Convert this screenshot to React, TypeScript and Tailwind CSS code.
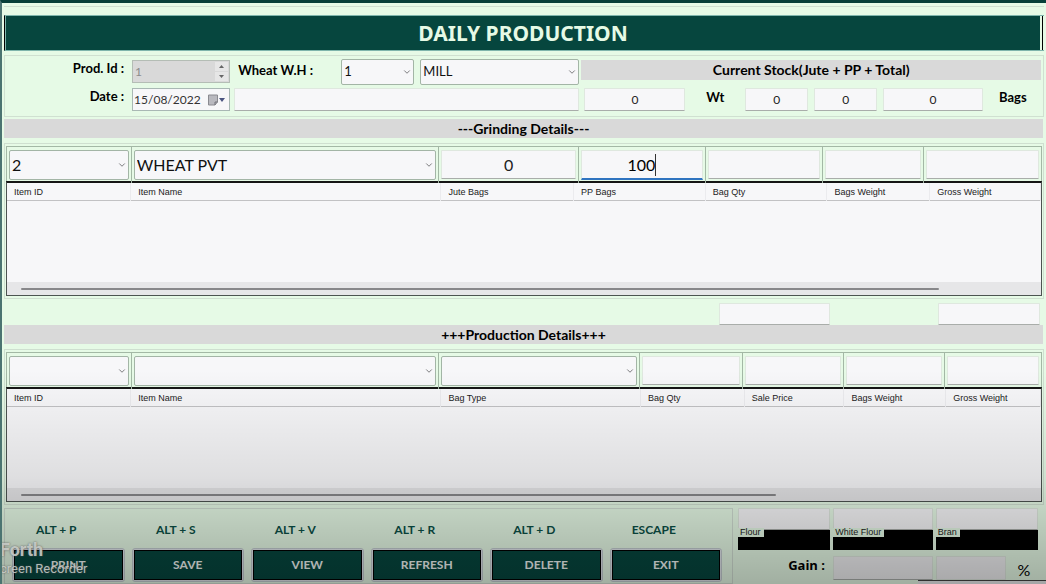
import { ChevronDown } from "lucide-react";

type SelectProps = {
  label: string;
  value?: string;
  className?: string;
  large?: boolean;
};

function Combo({ label, value = "", className = "", large = false }: SelectProps) {
  return (
    <div className={`relative min-w-0 ${className}`}>
      <select
        aria-label={label}
        defaultValue={value}
        className={`block h-full w-full min-w-0 appearance-none rounded-[2px] border border-[#a3b5a6] bg-[#f7f7f9] pr-5 pl-[2px] text-[#111] outline-none ${
          large ? "text-[16px]" : "text-[13px]"
        }`}
      >
        <option value={value}>{value}</option>
      </select>
      <ChevronDown
        className="pointer-events-none absolute top-1/2 right-[2px] h-[10px] w-[10px] -translate-y-1/2 text-[#7d7d80]"
        strokeWidth={2.4}
      />
    </div>
  );
}

type FieldProps = {
  label: string;
  value?: string;
  className?: string;
};

function Field({ label, value = "", className = "" }: FieldProps) {
  return (
    <input
      type="text"
      aria-label={label}
      defaultValue={value}
      className={`block min-w-0 rounded-[1px] border border-[#dfe8df] border-b-[#a9adaa] bg-[#f7f7f9] text-center text-[#222] outline-none ${className}`}
    />
  );
}

function SectionBar({ children }: { children: string }) {
  return (
    <h2 className="mr-px h-[19px] bg-[#d9d9d9] text-center text-[14px] leading-[20px] font-bold text-black">
      {children}
    </h2>
  );
}

type Column = { name: string; width: number };

function DataGrid({ columns, caption, thumb }: { columns: Column[]; caption: string; thumb: string }) {
  return (
    <div className="flex h-[115px] flex-col border border-t-2 border-[#4c5350] border-t-[#151515] bg-[#f7f7f9]">
      <table className="w-full table-fixed border-collapse" aria-label={caption}>
        <colgroup>
          {columns.map((c) => (
            <col key={c.name} style={{ width: `${(c.width / 1036) * 100}%` }} />
          ))}
        </colgroup>
        <thead>
          <tr className="h-[17px] border-b border-[#c2c2c4]">
            {columns.map((c) => (
              <th
                key={c.name}
                className="border-r border-[#ebebee] p-0 pt-px pl-[7px] text-left font-['Liberation_Sans',sans-serif] text-[9px] leading-[16px] font-normal text-[#222]"
              >
                {c.name}
              </th>
            ))}
          </tr>
        </thead>
        <tbody />
      </table>
      <div className="mt-auto flex h-[13px] items-center bg-[#e6e6e8] pl-[14px]">
        <div className={`h-[2px] rounded-full bg-[#87878a] ${thumb}`} />
      </div>
    </div>
  );
}

const grindingColumns: Column[] = [
  { name: "Item ID", width: 124 },
  { name: "Item Name", width: 311 },
  { name: "Jute Bags", width: 133 },
  { name: "PP Bags", width: 132 },
  { name: "Bag Qty", width: 122 },
  { name: "Bags Weight", width: 103 },
  { name: "Gross Weight", width: 111 },
];

const productionColumns: Column[] = [
  { name: "Item ID", width: 124 },
  { name: "Item Name", width: 311 },
  { name: "Bag Type", width: 200 },
  { name: "Bag Qty", width: 104 },
  { name: "Sale Price", width: 100 },
  { name: "Bags Weight", width: 102 },
  { name: "Gross Weight", width: 95 },
];

const actions = [
  { keys: "ALT + P", name: "PRINT" },
  { keys: "ALT + S", name: "SAVE" },
  { keys: "ALT + V", name: "VIEW" },
  { keys: "ALT + R", name: "REFRESH" },
  { keys: "ALT + D", name: "DELETE" },
  { keys: "ESCAPE", name: "EXIT" },
];

const outputs = ["Flour", "White Flour", "Bran"];

const cell = "min-w-0 border-r border-[#a3b8a5] px-[2px] py-[3px] last:border-r-0";

export default function App() {
  return (
    <main className="relative min-h-screen overflow-hidden border-t-3 border-l-2 border-t-[#073f38] border-l-[#4b7471] bg-[#e6fae6] pr-[2px] pl-[2px] font-[Lato,'Noto_Sans',sans-serif] text-black">
      <div className="h-1 border-b border-[#cfe0d0]" />

      <header className="mt-2 flex h-[36px] border-y border-[#7fb5ac] border-l border-l-black">
        <h1 className="mr-[2px] flex-1 border-l border-[#7fb5ac] bg-[#06463e] text-center font-['Noto_Sans','Open_Sans',sans-serif] text-[21px] leading-[35px] font-bold text-[#e6fae6]">
          DAILY PRODUCTION
        </h1>
        <div className="mr-px w-px bg-black" />
      </header>

      <section className="mt-1 grid h-[62px] grid-cols-[577fr_462fr] border border-[#d0e0d1] pt-[3px]">
        <div>
          <div className="grid h-[26px] grid-cols-[127fr_98fr_111fr_73fr_6fr_159fr_2fr]">
            <label htmlFor="prod-id" className="pr-2 text-right text-[13px] leading-[19px] font-bold">
              Prod. Id :
            </label>
            <div className="mt-px flex h-[23px] border border-[#b4bdb5] bg-[#d9d9d9]">
              <input
                id="prod-id"
                disabled
                defaultValue="1"
                className="w-full min-w-0 flex-1 pl-[2px] text-[12px] text-[#8b8b8b]"
              />
              <div className="my-px mr-px flex w-[13px] flex-col gap-px">
                <button type="button" aria-label="Increase" disabled className="flex flex-1 items-center justify-center bg-[#e6e6e6]">
                  <svg width="5" height="3" viewBox="0 0 5 3">
                    <path d="M0 3L2.5 0L5 3Z" fill="#666" />
                  </svg>
                </button>
                <button type="button" aria-label="Decrease" disabled className="flex flex-1 items-center justify-center bg-[#e6e6e6]">
                  <svg width="5" height="3" viewBox="0 0 5 3">
                    <path d="M0 0L2.5 3L5 0Z" fill="#666" />
                  </svg>
                </button>
              </div>
            </div>
            <label htmlFor="wheat-wh" className="pl-2 text-[13px] leading-[22px] font-bold">
              Wheat W.H :
            </label>
            <div className="relative h-[26px] min-w-0">
              <select
                id="wheat-wh"
                defaultValue="1"
                className="block h-full w-full appearance-none rounded-[2px] border border-[#a3b5a6] bg-[#f7f7f9] pr-5 pl-[2px] text-[13px] text-[#111] outline-none"
              >
                <option value="1">1</option>
              </select>
              <ChevronDown
                className="pointer-events-none absolute top-1/2 right-[2px] h-[10px] w-[10px] -translate-y-1/2 text-[#7d7d80]"
                strokeWidth={2.4}
              />
            </div>
            <div />
            <Combo label="Wheat warehouse name" value="MILL" className="h-[26px]" />
          </div>
          <div className="mt-[3px] grid h-[23px] grid-cols-[127fr_98fr_4fr_345fr_2fr]">
            <label htmlFor="date" className="pr-2 text-right text-[13px] leading-[16px] font-bold">
              Date :
            </label>
            <div className="flex items-center border border-[#a9b8b4] bg-[#f7f7f9] pr-1">
              <input
                id="date"
                defaultValue="15/08/2022"
                className="h-full w-full min-w-0 flex-1 pl-px text-[12px] text-[#333] outline-none"
              />
              <button type="button" aria-label="Open calendar" className="flex items-center gap-px">
                <svg width="10" height="12" viewBox="0 0 10 12">
                  <path d="M0.5 1H9.5V8L7 11H0.5Z" fill="#b9b9bf" stroke="#8a8a90" />
                  <path d="M9.5 8H7V11" fill="none" stroke="#707078" />
                </svg>
                <svg width="6" height="4" viewBox="0 0 6 4">
                  <path d="M0 0H6L3 4Z" fill="#4a5480" />
                </svg>
              </button>
            </div>
            <div />
            <Field label="Remarks" className="text-[13px]" />
          </div>
        </div>
        <div className="pr-[2px]">
          <h2 className="mt-px h-[20px] bg-[#d9d9d9] text-center text-[14px] leading-[19px] font-bold">
            Current Stock(Jute + PP + Total)
          </h2>
          <div className="mt-2 grid h-[23px] grid-cols-[3fr_101fr_60fr_63fr_6fr_63fr_6fr_100fr_58fr] text-[12px]">
            <div />
            <Field label="Stock weight" value="0" />
            <span className="text-center text-[13px] leading-[19px] font-bold">Wt</span>
            <Field label="Jute stock" value="0" />
            <div />
            <Field label="PP stock" value="0" />
            <div />
            <Field label="Total stock" value="0" />
            <span className="pl-4 text-[13px] leading-[19px] font-bold">Bags</span>
          </div>
        </div>
      </section>

      <div className="mt-[2px]">
        <SectionBar>---Grinding Details---</SectionBar>
      </div>

      <section className="mt-[5px] h-[156px] border border-[#cfdfd0] px-px pt-[2px]">
        <div className="grid h-[35px] grid-cols-[125fr_308fr_140fr_127fr_118fr_101fr_117fr] border border-b-0 border-[#a3b8a5]">
          <div className={cell}>
            <Combo label="Grinding item ID" value="2" large className="h-[30px]" />
          </div>
          <div className={cell}>
            <Combo label="Grinding item name" value="WHEAT PVT" large className="h-[30px]" />
          </div>
          <div className={cell}>
            <Field label="Jute bags" value="0" className="h-[29px] w-full text-[16px]" />
          </div>
          <div className={cell}>
            <div className="flex h-[30px] items-center justify-center border border-[#dfe8df] border-b-2 border-b-[#2f74c0] bg-[#f7f7f9]">
              <input
                type="text"
                aria-label="PP bags"
                defaultValue="100"
                className="h-full w-[28px] min-w-0 text-right text-[16px] outline-none"
              />
              <span className="h-[22px] w-px bg-[#333]" />
            </div>
          </div>
          <div className={cell}>
            <Field label="Bag quantity" className="h-[29px] w-full text-[16px]" />
          </div>
          <div className={cell}>
            <Field label="Bags weight" className="h-[29px] w-full text-[16px]" />
          </div>
          <div className={cell}>
            <Field label="Gross weight" className="h-[29px] w-full text-[16px]" />
          </div>
        </div>
        <DataGrid columns={grindingColumns} caption="Grinding details" thumb="w-[90%]" />
      </section>

      <div className="mt-1 grid h-[22px] grid-cols-[715fr_111fr_108fr_102fr_4fr]">
        <div />
        <Field label="Total bag quantity" className="h-[22px]" />
        <div />
        <Field label="Total gross weight" className="h-[22px]" />
      </div>

      <SectionBar>+++Production Details+++</SectionBar>

      <section className="mt-[5px] h-[156px] border border-[#cfdfd0] px-px pt-[2px]">
        <div className="grid h-[35px] grid-cols-[125fr_308fr_201fr_103fr_102fr_101fr_96fr] border border-b-0 border-[#a3b8a5]">
          <div className={cell}>
            <Combo label="Production item ID" large className="h-[30px]" />
          </div>
          <div className={cell}>
            <Combo label="Production item name" large className="h-[30px]" />
          </div>
          <div className={cell}>
            <Combo label="Bag type" large className="h-[30px]" />
          </div>
          <div className={cell}>
            <Field label="Production bag quantity" className="h-[29px] w-full text-[16px]" />
          </div>
          <div className={cell}>
            <Field label="Sale price" className="h-[29px] w-full text-[16px]" />
          </div>
          <div className={cell}>
            <Field label="Production bags weight" className="h-[29px] w-full text-[16px]" />
          </div>
          <div className={cell}>
            <Field label="Production gross weight" className="h-[29px] w-full text-[16px]" />
          </div>
        </div>
        <DataGrid columns={productionColumns} caption="Production details" thumb="w-[74%]" />
      </section>

      <footer className="mt-[3px] grid h-[76px] grid-cols-[729fr_311fr]">
        <div className="grid grid-cols-6 gap-x-[7px] border border-[#d0ddd2] pt-[11px] pr-[10px] pl-[7px]">
          {actions.map((a) => (
            <div key={a.name}>
              <p className="pr-6 text-center text-[12px] leading-[20px] font-bold text-[#0b5046]">{a.keys}</p>
              <button
                type="button"
                className="mt-2 block h-[34px] w-full rounded-[3px] border border-[#c3ccd0] bg-[#e0e4ea] p-px"
              >
                <span className="block h-[30px] border border-black bg-[#06463e] text-center text-[12px] leading-[28px] font-bold text-[#eef4f2]">
                  {a.name}
                </span>
              </button>
            </div>
          ))}
        </div>
        <div className="pr-[6px] pl-[5px]">
          <div className="grid grid-cols-[92fr_99fr_102fr] gap-x-[3px]">
            {outputs.map((name) => (
              <div key={name} className="relative min-w-0">
                <Field label={name} className="h-[22px] w-full" />
                <div className="h-[20px] bg-black" />
                <span className="absolute top-[20px] left-0 bg-[#e6fae6] pr-[3px] pl-[2px] font-['Liberation_Sans',sans-serif] text-[9px] leading-[9px] text-[#222]">
                  {name}
                </span>
              </div>
            ))}
          </div>
          <div className="mt-[6px] grid h-[25px] grid-cols-[95fr_100fr_3fr_70fr_32fr]">
            <label htmlFor="gain" className="pr-2 text-right font-['Open_Sans',sans-serif] text-[13px] leading-[18px] font-bold">
              Gain :
            </label>
            <input id="gain" className="h-[24px] w-full min-w-0 border border-[#dfe8df] border-b-[#a9adaa] bg-[#f0f0f2]" />
            <div />
            <input aria-label="Gain percent" className="h-[24px] w-full min-w-0 border border-[#dfe8df] bg-[#f0f0f2]" />
            <span className="pl-1 text-center text-[16px] leading-[28px]">%</span>
          </div>
        </div>
      </footer>

      <div className="pointer-events-none absolute right-0 bottom-0 h-[4px] w-[128px] border-t border-[#444] bg-[#ececee]" />
      <div className="pointer-events-none absolute right-0 bottom-0 left-0 h-[214px] bg-linear-to-b from-transparent via-black/10 to-black/30" />
      <div className="pointer-events-none absolute bottom-[6px] left-0 -ml-[2px] font-[Roboto,sans-serif] whitespace-nowrap text-[#d8dcd8]/80 [text-shadow:0_0_2px_#555]">
        <p className="text-[18px] leading-[20px] font-bold">Forth</p>
        <p className="text-[13px] leading-[18px]">creen Recorder</p>
      </div>
    </main>
  );
}
